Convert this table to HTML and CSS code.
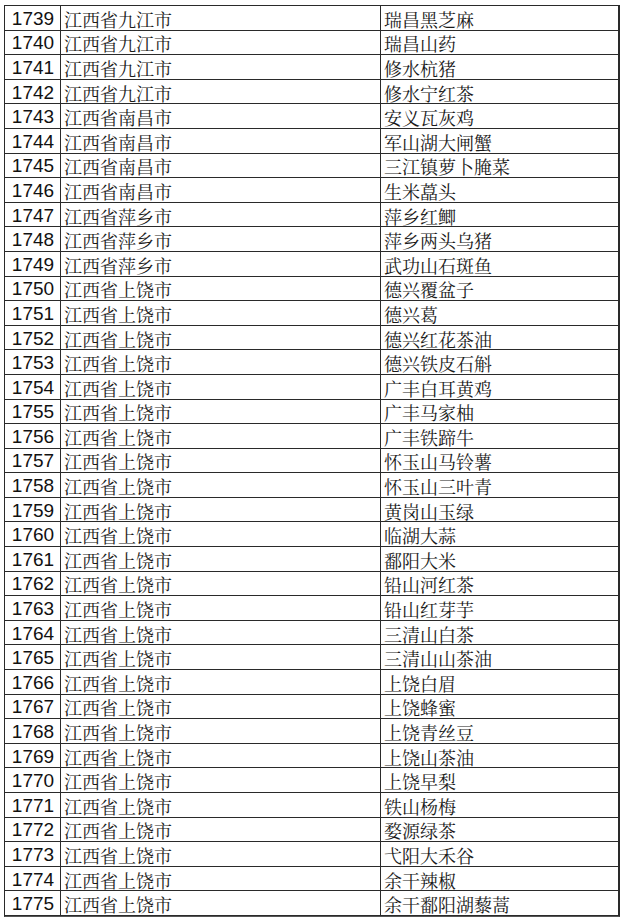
FILE: index.html
```html
<!DOCTYPE html>
<html lang="zh-CN">
<head>
<meta charset="utf-8">
<title>江西省地理标志产品</title>
<link rel="stylesheet" href="styles.css">
</head>
<body>
<div class="sheet">
<div class="num">1739</div><div class="city">江西省九江市</div><div class="prod">瑞昌黑芝麻</div>
<div class="num">1740</div><div class="city">江西省九江市</div><div class="prod">瑞昌山药</div>
<div class="num">1741</div><div class="city">江西省九江市</div><div class="prod">修水杭猪</div>
<div class="num">1742</div><div class="city">江西省九江市</div><div class="prod">修水宁红茶</div>
<div class="num">1743</div><div class="city">江西省南昌市</div><div class="prod">安义瓦灰鸡</div>
<div class="num">1744</div><div class="city">江西省南昌市</div><div class="prod">军山湖大闸蟹</div>
<div class="num">1745</div><div class="city">江西省南昌市</div><div class="prod">三江镇萝卜腌菜</div>
<div class="num">1746</div><div class="city">江西省南昌市</div><div class="prod">生米藠头</div>
<div class="num">1747</div><div class="city">江西省萍乡市</div><div class="prod">萍乡红鲫</div>
<div class="num">1748</div><div class="city">江西省萍乡市</div><div class="prod">萍乡两头乌猪</div>
<div class="num">1749</div><div class="city">江西省萍乡市</div><div class="prod">武功山石斑鱼</div>
<div class="num">1750</div><div class="city">江西省上饶市</div><div class="prod">德兴覆盆子</div>
<div class="num">1751</div><div class="city">江西省上饶市</div><div class="prod">德兴葛</div>
<div class="num">1752</div><div class="city">江西省上饶市</div><div class="prod">德兴红花茶油</div>
<div class="num">1753</div><div class="city">江西省上饶市</div><div class="prod">德兴铁皮石斛</div>
<div class="num">1754</div><div class="city">江西省上饶市</div><div class="prod">广丰白耳黄鸡</div>
<div class="num">1755</div><div class="city">江西省上饶市</div><div class="prod">广丰马家柚</div>
<div class="num">1756</div><div class="city">江西省上饶市</div><div class="prod">广丰铁蹄牛</div>
<div class="num">1757</div><div class="city">江西省上饶市</div><div class="prod">怀玉山马铃薯</div>
<div class="num">1758</div><div class="city">江西省上饶市</div><div class="prod">怀玉山三叶青</div>
<div class="num">1759</div><div class="city">江西省上饶市</div><div class="prod">黄岗山玉绿</div>
<div class="num">1760</div><div class="city">江西省上饶市</div><div class="prod">临湖大蒜</div>
<div class="num">1761</div><div class="city">江西省上饶市</div><div class="prod">鄱阳大米</div>
<div class="num">1762</div><div class="city">江西省上饶市</div><div class="prod">铅山河红茶</div>
<div class="num">1763</div><div class="city">江西省上饶市</div><div class="prod">铅山红芽芋</div>
<div class="num">1764</div><div class="city">江西省上饶市</div><div class="prod">三清山白茶</div>
<div class="num">1765</div><div class="city">江西省上饶市</div><div class="prod">三清山山茶油</div>
<div class="num">1766</div><div class="city">江西省上饶市</div><div class="prod">上饶白眉</div>
<div class="num">1767</div><div class="city">江西省上饶市</div><div class="prod">上饶蜂蜜</div>
<div class="num">1768</div><div class="city">江西省上饶市</div><div class="prod">上饶青丝豆</div>
<div class="num">1769</div><div class="city">江西省上饶市</div><div class="prod">上饶山茶油</div>
<div class="num">1770</div><div class="city">江西省上饶市</div><div class="prod">上饶早梨</div>
<div class="num">1771</div><div class="city">江西省上饶市</div><div class="prod">铁山杨梅</div>
<div class="num">1772</div><div class="city">江西省上饶市</div><div class="prod">婺源绿茶</div>
<div class="num">1773</div><div class="city">江西省上饶市</div><div class="prod">弋阳大禾谷</div>
<div class="num">1774</div><div class="city">江西省上饶市</div><div class="prod">余干辣椒</div>
<div class="num">1775</div><div class="city">江西省上饶市</div><div class="prod">余干鄱阳湖藜蒿</div>
</div>
</body>
</html>
```

FILE: styles.css
```css
html, body {
  margin: 0;
  padding: 0;
  background: #ffffff;
}

.sheet {
  display: grid;
  grid-template-columns: 56px 320px 238px;
  grid-auto-rows: 24.6px;
  width: 614px;
  margin: 5px 0 0 4px;
  border-top: 1px solid #2a2a2a;
  border-left: 1px solid #2a2a2a;
  border-right: 1px solid #2a2a2a;
  border-bottom: 1px solid #555;
  color: #111;
}

.sheet > div {
  box-sizing: border-box;
  border-right: 1px solid #2a2a2a;
  border-bottom: 1px solid #2a2a2a;
  display: flex;
  align-items: center;
  padding-top: 2px;
  white-space: nowrap;
  overflow: hidden;
}

.num {
  justify-content: center;
  font-family: "Liberation Sans", Arial, sans-serif;
  font-size: 19px;
  padding-left: 1px;
}

.city,
.prod {
  padding-left: 3px;
  font-family: "Noto Serif CJK SC", "Noto Sans CJK SC", serif;
  font-size: 18px;
  color: #1a1a1a;
}
```
